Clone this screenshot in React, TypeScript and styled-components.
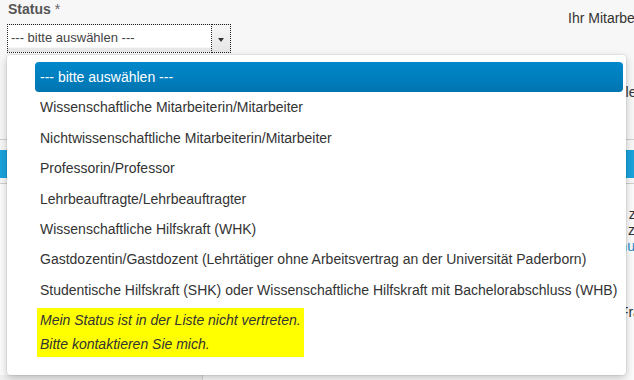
import styled, { createGlobalStyle } from 'styled-components';

const STATUS_OPTIONS = [
  'Wissenschaftliche Mitarbeiterin/Mitarbeiter',
  'Nichtwissenschaftliche Mitarbeiterin/Mitarbeiter',
  'Professorin/Professor',
  'Lehrbeauftragte/Lehrbeauftragter',
  'Wissenschaftliche Hilfskraft (WHK)',
  'Gastdozentin/Gastdozent (Lehrtätiger ohne Arbeitsvertrag an der Universität Paderborn)',
  'Studentische Hilfskraft (SHK) oder Wissenschaftliche Hilfskraft mit Bachelorabschluss (WHB)',
];

const PLACEHOLDER = '--- bitte auswählen ---';

const GlobalStyle = createGlobalStyle`
  html, body {
    margin: 0;
    padding: 0;
    background: #f7f7f7;
  }

  body {
    font-family: "Liberation Sans", Arial, sans-serif;
    color: #333;
  }
`;

export default function App() {
  return (
    <>
      <GlobalStyle />
      <Page>
        <TopRow>
          <FieldGroup>
            <Label>
              Status <span className="required">*</span>
            </Label>
            <Select>
              <SelectValue>{PLACEHOLDER}</SelectValue>
              <SelectButton>
                <Caret />
              </SelectButton>
            </Select>
          </FieldGroup>
          <SideColumn>
            <SideText>Ihr Mitarbeiterstatus an der Universität</SideText>
            <SideText $top={58}>Bitte wählen Sie aus der Liste oder kontaktieren Sie uns.</SideText>
          </SideColumn>
        </TopRow>

        <TabBand>
          <ActiveTab />
        </TabBand>

        <LowerRow>
          <SideColumn>
            <SideText $top={12}>Hinweise zur Eingabe der Angaben für die Registrierung</SideText>
            <SideText>Angaben zu Ihrer Person werden elektronisch gespeichert</SideText>
            <SideLink>Datenschutz: Informationen</SideLink>
            <SideText $top={50}>Weitere Fragen richten Sie bitte an das Team</SideText>
          </SideColumn>
        </LowerRow>

        <BottomRow>
          <BottomCell />
          <BottomCell $light />
        </BottomRow>

        <DropdownPanel>
          <OptionList>
            <OptionItem $active>{PLACEHOLDER}</OptionItem>
            {STATUS_OPTIONS.map((option) => (
              <OptionItem key={option}>{option}</OptionItem>
            ))}
          </OptionList>
          <Notice>
            <div>Mein Status ist in der Liste nicht vertreten.</div>
            <div>Bitte kontaktieren Sie mich.</div>
          </Notice>
        </DropdownPanel>
      </Page>
    </>
  );
}

const Page = styled.div`
  position: relative;
  width: 634px;
  height: 380px;
  overflow: hidden;

  display: flex;
  flex-direction: column;
`;

const TopRow = styled.div`
  height: 139px;

  display: flex;
  justify-content: space-between;
  padding-left: 7px;
`;

const FieldGroup = styled.div`
  display: flex;
  flex-direction: column;
  gap: 6px;
`;

const Label = styled.label`
  margin-left: 1px;

  font-size: 14px;
  line-height: 18px;
  font-weight: bold;
  color: #555;

  .required {
    font-weight: normal;
    color: #666;
  }
`;

const Select = styled.div`
  width: 224px;
  height: 29px;

  display: flex;
`;

const SelectValue = styled.div`
  flex: 1;
  box-sizing: border-box;
  padding: 0 3px;

  border: 1px dotted #222;
  background: linear-gradient(to bottom, #fff 0, #fff 82%, #e8e8e8 86%, #e8e8e8 100%);

  font-size: 13px;
  line-height: 25px;
  color: #444;
`;

const SelectButton = styled.div`
  width: 19px;
  box-sizing: border-box;

  display: flex;
  align-items: center;
  justify-content: center;

  border: 1px dotted #222;
  border-left: none;
  background: linear-gradient(to bottom, #f6f6f6, #e6e6e6);
`;

const Caret = styled.span`
  width: 0;
  height: 0;
  margin-top: 2px;

  border-left: 3.5px solid transparent;
  border-right: 3.5px solid transparent;
  border-top: 4px solid #333;
`;

const SideColumn = styled.div`
  width: 66px;
  padding-top: 10px;

  display: flex;
  flex-direction: column;
`;

const SideText = styled.div<{ $top?: number }>`
  margin-top: ${({ $top }) => $top ?? 0}px;

  font-size: 14px;
  line-height: 16px;
  white-space: nowrap;
  color: #333;
`;

const SideLink = styled(SideText)`
  color: #1a8fc9;
`;

const TabBand = styled.div`
  height: 45px;
  box-sizing: border-box;
  padding-top: 10px;

  border-top: 1px solid #cfcfcf;
  border-bottom: 1px solid #cfcfcf;
`;

const ActiveTab = styled.div`
  height: 28px;
  background: #1aa3dc;
`;

const LowerRow = styled.div`
  height: 191px;
  box-sizing: border-box;

  display: flex;
  justify-content: flex-end;
  background: #fbfbfb;
`;

const BottomRow = styled.div`
  flex: 1;
  display: flex;
`;

const BottomCell = styled.div<{ $light?: boolean }>`
  width: ${({ $light }) => ($light ? 'auto' : '202px')};
  flex: ${({ $light }) => ($light ? 1 : 'none')};

  background: ${({ $light }) => ($light ? '#fafafa' : '#efefef')};
  border-left: ${({ $light }) => ($light ? '1px solid #d6d6d6' : 'none')};
`;

const DropdownPanel = styled.div`
  position: absolute;
  top: 55px;
  left: 7px;
  width: 619px;
  height: 320px;
  box-sizing: border-box;
  padding: 7px 3px 0 28px;

  background: #fff;
  border-radius: 4px;
  box-shadow:
    0 3px 9px rgba(0, 0, 0, 0.22),
    0 0 0 1px rgba(0, 0, 0, 0.05);
`;

const OptionList = styled.ul`
  margin: 0;
  padding: 0;
  list-style: none;
`;

const OptionItem = styled.li<{ $active?: boolean }>`
  height: 30.4px;
  padding: 0 5px;

  font-size: 14px;
  line-height: 30px;
  white-space: nowrap;
  color: ${({ $active }) => ($active ? '#fff' : '#333')};

  border-radius: 4px;
  background: ${({ $active }) =>
    $active ? 'linear-gradient(to bottom, #0088cc, #0075b0)' : 'transparent'};
`;

const Notice = styled.div`
  display: inline-block;
  margin-top: 3px;
  margin-left: 2px;
  padding: 0 3px 1px;

  background: #ffff00;

  font-size: 14px;
  font-style: italic;
  line-height: 24px;
  color: #333;
`;
